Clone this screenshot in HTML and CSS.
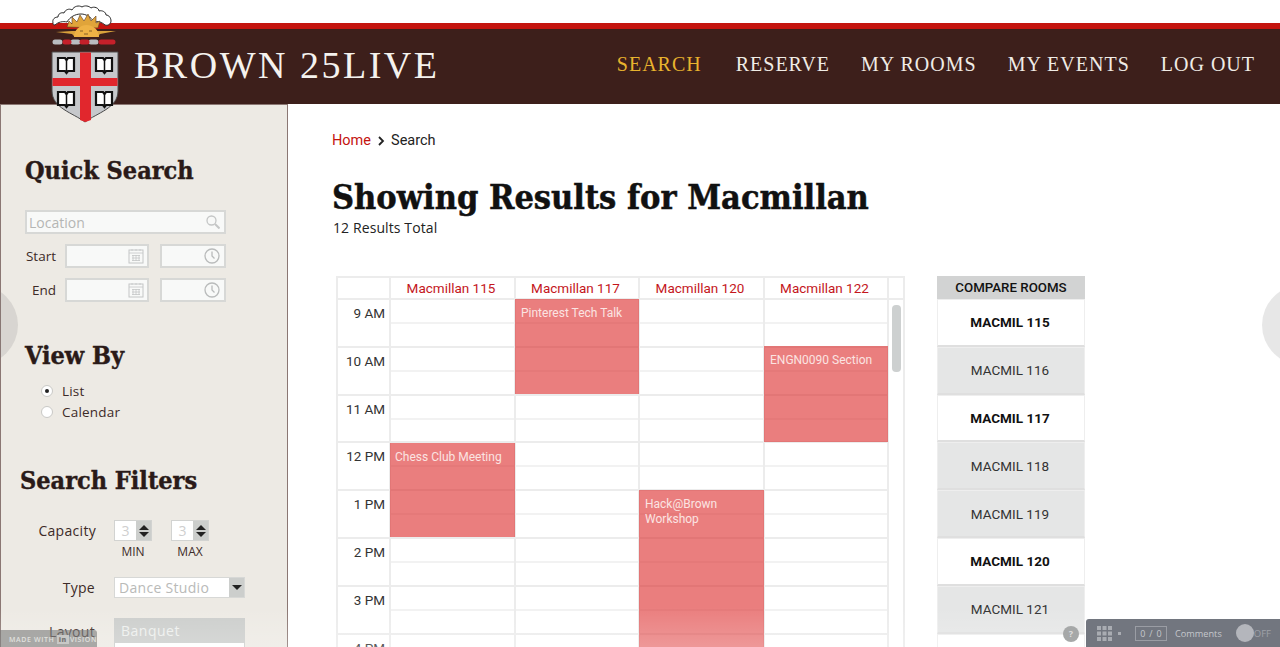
FILE: index.html
```html
<!DOCTYPE html>
<html lang="en">
<head>
<meta charset="utf-8">
<title>Brown 25Live</title>
<link rel="stylesheet" href="styles.css">
</head>
<body>
<div class="page">
<header class="header">
  <svg class="crest" viewBox="0 0 68 118" width="68" height="118">
    <path d="M2 18c-1-4 2-6 5-6 0-3 3-5 6-4 1-3 5-5 8-3 2-4 7-5 10-3 3-2 7-1 9 1 3-2 8 0 8 3 3-1 7 1 7 4 3 0 5 3 5 6 0 3-3 5-6 4-3-3-8-4-11-3-3-5-8-8-13-8-6 0-11 3-14 8-4-1-9 0-12 3-2 0-2-1-2-2z" fill="#fff" stroke="#2b2b2b" stroke-width="1"/>
    <path d="M16 22l2-6 3 3 0-7 5 5 3-7 4 6 4-7 3 7 5-5 0 7 4-2-2 7z" fill="#e0a43a" stroke="#5a3a20" stroke-width=".6"/>
    <path d="M5 27l16-1h28l16 0-16 3-3 3H24l-3-3z" fill="#d9a23c"/>
    <path d="M23 32a12.500 12 0 0 1 25 0z" fill="#eeb245"/>
    <path d="M29 26h3M38 26h3M33 29h4" stroke="#6a4a20" stroke-width=".8" fill="none"/>
    <g stroke-width="5" stroke-linecap="round" fill="none">
      <path d="M4 37h5M22 37h5M40 37h5" stroke="#b9bcc0"/>
      <path d="M14 37h4M31 37h5M50 37h12" stroke="#c4202a"/>
    </g>
    <path d="M1 47H67V86C67 103 46 108 34 117 22 108 1 103 1 86z" fill="#c6c8cb" stroke="#4a4a4a" stroke-width="1"/>
    <path d="M29 47.500H40V73H66.500V81H40V115L34.500 117 29 115V81H1.500V73H29z" fill="#e1272d"/>
    <g fill="#fff" stroke="#111" stroke-width="2.200">
      <path d="M7 53h7l1.500 2 1.500-2h6v13h-6l-1.500 2-1.500-2H7z"/><path d="M15.500 55V66" stroke-width="1.500"/>
      <path d="M45 53h7l1.500 2 1.500-2h6v13h-6l-1.500 2-1.500-2h-7z"/><path d="M53.500 55V66" stroke-width="1.500"/>
      <path d="M7 87h7l1.500 2 1.500-2h6v13h-6l-1.500 2-1.500-2H7z"/><path d="M15.500 89V100" stroke-width="1.500"/>
      <path d="M45 87h7l1.500 2 1.500-2h6v13h-6l-1.500 2-1.500-2h-7z"/><path d="M53.500 89V100" stroke-width="1.500"/>
    </g>
  </svg>
  <div class="brand">BROWN 25LIVE</div>
  <nav class="nav">
    <a class="nav-link active">SEARCH</a>
    <a class="nav-link">RESERVE</a>
    <a class="nav-link">MY ROOMS</a>
    <a class="nav-link">MY EVENTS</a>
    <a class="nav-link">LOG OUT</a>
  </nav>
</header>
<div class="main">
  <aside class="sidebar">
    <h2 class="side-title">Quick Search</h2>
    <div class="field wide"><span>Location</span>
      <svg width="14" height="14" viewBox="0 0 14 14" fill="none" stroke="#c4c6c6" stroke-width="1.300"><circle cx="5.500" cy="5.500" r="4.500"/><path d="M9 9l4.500 4.500" stroke-width="2"/></svg>
    </div>
    <div class="date-row">
      <label class="date-label">Start</label>
      <div class="field date"><svg class="cal" width="16" height="16" viewBox="0 0 16 16" fill="none" stroke="#c4c6c6"><rect x="1" y="2" width="14" height="13"/><path d="M1 5h14M4 1v2M8 1v2M12 1v2M4 7.500h8M4 10h8M4 12.500h8M5 7v6M8 7v6M11 7v6" stroke-width=".8"/></svg></div>
      <div class="field time"><svg width="16" height="16" viewBox="0 0 16 16" fill="none" stroke="#b9bbbb" stroke-width="1.300"><circle cx="8" cy="8" r="7"/><path d="M8 3.500V8l2.500 2.500"/></svg></div>
    </div>
    <div class="date-row">
      <label class="date-label">End</label>
      <div class="field date"><svg class="cal" width="16" height="16" viewBox="0 0 16 16" fill="none" stroke="#c4c6c6"><rect x="1" y="2" width="14" height="13"/><path d="M1 5h14M4 1v2M8 1v2M12 1v2M4 7.500h8M4 10h8M4 12.500h8M5 7v6M8 7v6M11 7v6" stroke-width=".8"/></svg></div>
      <div class="field time"><svg width="16" height="16" viewBox="0 0 16 16" fill="none" stroke="#b9bbbb" stroke-width="1.300"><circle cx="8" cy="8" r="7"/><path d="M8 3.500V8l2.500 2.500"/></svg></div>
    </div>
    <h2 class="side-title view-title">View By</h2>
    <div class="radio-row"><span class="radio on"></span>List</div>
    <div class="radio-row"><span class="radio"></span>Calendar</div>
    <h2 class="side-title filter-title">Search Filters</h2>
    <div class="cap-row">
      <label class="filter-label">Capacity</label>
      <div class="spin-wrap"><div class="spin"><span class="spin-val">3</span><span class="spin-btns"><i class="up"></i><i class="down"></i></span></div><small>MIN</small></div>
      <div class="spin-wrap"><div class="spin"><span class="spin-val">3</span><span class="spin-btns"><i class="up"></i><i class="down"></i></span></div><small>MAX</small></div>
    </div>
    <div class="type-row">
      <label class="filter-label">Type</label>
      <div class="select"><span>Dance Studio</span><b><i class="down"></i></b></div>
    </div>
    <div class="layout-row">
      <label class="filter-label">Layout</label>
      <div class="listbox"><div class="listbox-head">Banquet</div><div class="listbox-body"></div></div>
    </div>
  </aside>
  <section class="content">
    <div class="crumbs"><a>Home</a><svg width="8" height="10" viewBox="0 0 8 10" fill="none" stroke="#222" stroke-width="1.800"><path d="M2 1l4 4-4 4"/></svg><span>Search</span></div>
    <h1 class="title">Showing Results for Macmillan</h1>
    <p class="total">12 Results Total</p>
    <div class="results">
      <div class="calendar">
        <div class="cal-head">
          <div class="corner"></div>
          <div class="room">Macmillan 115</div><div class="room">Macmillan 117</div><div class="room">Macmillan 120</div><div class="room">Macmillan 122</div>
          <div class="sb-head"></div>
        </div>
        <div class="cal-body">
          <div class="hours">
            <div class="hour"><span>9 AM</span></div><div class="hour"><span>10 AM</span></div><div class="hour"><span>11 AM</span></div><div class="hour"><span>12 PM</span></div><div class="hour"><span>1 PM</span></div><div class="hour"><span>2 PM</span></div><div class="hour"><span>3 PM</span></div><div class="hour"><span>4 PM</span></div>
          </div>
          <div class="col">
            <div class="slot"></div><div class="slot"></div><div class="slot"></div><div class="slot"></div><div class="slot"></div><div class="slot"></div><div class="slot"></div><div class="slot"></div>
            <div class="event ev-chess">Chess Club Meeting</div>
          </div>
          <div class="col">
            <div class="slot"></div><div class="slot"></div><div class="slot"></div><div class="slot"></div><div class="slot"></div><div class="slot"></div><div class="slot"></div><div class="slot"></div>
            <div class="event ev-pin">Pinterest Tech Talk</div>
          </div>
          <div class="col">
            <div class="slot"></div><div class="slot"></div><div class="slot"></div><div class="slot"></div><div class="slot"></div><div class="slot"></div><div class="slot"></div><div class="slot"></div>
            <div class="event ev-hack">Hack@Brown Workshop</div>
          </div>
          <div class="col">
            <div class="slot"></div><div class="slot"></div><div class="slot"></div><div class="slot"></div><div class="slot"></div><div class="slot"></div><div class="slot"></div><div class="slot"></div>
            <div class="event ev-engn">ENGN0090 Section</div>
          </div>
          <div class="scroll"><div class="thumb"></div></div>
        </div>
      </div>
      <div class="compare">
        <div class="compare-head">COMPARE ROOMS</div>
        <div class="cmp on">MACMIL 115</div>
        <div class="cmp">MACMIL 116</div>
        <div class="cmp on">MACMIL 117</div>
        <div class="cmp">MACMIL 118</div>
        <div class="cmp">MACMIL 119</div>
        <div class="cmp on">MACMIL 120</div>
        <div class="cmp">MACMIL 121</div>
        <div class="cmp on"></div>
      </div>
    </div>
  </section>
</div>
<div class="nav-circle left"></div>
<div class="nav-circle right"></div>
<div class="fade"></div>
<div class="badge">MADE WITH <b>in</b>VISION</div>
<div class="help">?</div>
<div class="toolbar">
  <svg width="15" height="15" viewBox="0 0 15 15" fill="#a9acb2"><rect width="4" height="4"/><rect x="5.500" width="4" height="4"/><rect x="11" width="4" height="4"/><rect y="5.500" width="4" height="4"/><rect x="5.500" y="5.500" width="4" height="4"/><rect x="11" y="5.500" width="4" height="4"/><rect y="11" width="4" height="4"/><rect x="5.500" y="11" width="4" height="4"/><rect x="11" y="11" width="4" height="4"/></svg>
  <span class="tb-caret"></span>
  <span class="tb-count">0 / 0</span>
  <span class="tb-label">Comments</span>
  <span class="tb-toggle"><i></i>OFF</span>
</div>
</div>
</body>
</html>
```
FILE: styles.css
```css
* { box-sizing: border-box; }
html, body { margin: 0; padding: 0; }
body { background: #fff; font-family: "Open Sans", sans-serif; color: #111; }
.page { position: relative; width: 1280px; height: 647px; overflow: hidden; }

.header { position: relative; display: flex; align-items: center; height: 104px; padding: 23px 25px 0 134px; background: linear-gradient(#fff 0 23px, #c4140f 23px 29px, #3d1f1b 29px); }
.crest { position: absolute; left: 51px; top: 5px; z-index: 3; }
.brand { font-family: "Liberation Serif", serif; font-size: 38px; letter-spacing: 2.500px; color: #f5f2ee; white-space: nowrap; padding-top: 3px; }
.nav { display: flex; margin-left: auto; gap: 31px; padding-top: 1px; }
.nav-link { font-family: "Liberation Serif", serif; font-size: 20px; letter-spacing: 1px; color: #f0ece6; white-space: nowrap; }
.nav-link.active { color: #e8b32e; margin-right: 3px; }

.main { display: flex; height: 543px; }
.sidebar { flex: 0 0 288px; height: 543px; overflow: hidden; background: #edeae4; border-left: 1px solid #8b7773; border-right: 1px solid #8b7773; border-top: 1px solid #8b7773; padding: 0 0 0 24px; color: #3d2b28; font-size: 13.500px; }
.side-title { margin: 0; font-family: "DejaVu Serif Condensed", "DejaVu Serif", serif; font-weight: 700; font-size: 25px; line-height: 30px; color: #2a1a18; -webkit-text-stroke: .4px #2a1a18; }
.sidebar > .side-title:first-child { margin-top: 51px; }
.field { display: flex; align-items: center; justify-content: flex-end; height: 24px; background: #f8f9f8; border: 2px solid #d7d8d6; padding: 0 4px; }
.field.wide { width: 201px; margin-top: 24px; padding-left: 2px; justify-content: space-between; color: #b5b6b4; font-size: 14px; }
.date-row { display: flex; align-items: center; margin-top: 10px; }
.date-label { width: 31px; text-align: right; font-size: 13.500px; white-space: nowrap; }
.field.date { width: 84px; margin-left: 9px; padding-right: 3px; }
.field.time { width: 66px; margin-left: 11px; }
.view-title { margin-top: 39px; }
.radio-row { display: flex; align-items: center; gap: 9px; height: 21px; margin-left: 16px; font-size: 13.500px; letter-spacing: .2px; }
.view-title + .radio-row { margin-top: 9px; }
.radio { width: 12px; height: 12px; border-radius: 50%; background: #fff; border: 1px solid #c9c9c6; display: flex; align-items: center; justify-content: center; }
.radio.on::after { content: ""; width: 4px; height: 4px; border-radius: 50%; background: #222; }
.filter-title { margin: 44px 0 0 -5px; }
.filter-label { text-align: right; font-size: 14px; letter-spacing: .3px; }
.cap-row { display: flex; align-items: flex-start; margin-top: 24px; }
.cap-row .filter-label { width: 71px; line-height: 22px; }
.spin-wrap { display: flex; flex-direction: column; align-items: center; width: 38px; margin-left: 18px; }
.spin-wrap + .spin-wrap { margin-left: 19px; }
.spin { display: flex; width: 38px; height: 21px; background: #fff; border: 1px solid #d2d3d1; }
.spin-val { flex: 1; text-align: center; color: #cfcfcf; font-size: 14px; line-height: 19px; }
.spin-btns { width: 15px; background: #cccecc; display: flex; flex-direction: column; align-items: center; justify-content: center; gap: 2px; }
.up { width: 0; height: 0; border: 5px solid transparent; border-top: 0; border-bottom: 5px solid #222; }
.down { width: 0; height: 0; border: 5px solid transparent; border-bottom: 0; border-top: 5px solid #222; }
.spin-wrap small { font-size: 12px; margin-top: 2px; }
.type-row { display: flex; align-items: center; margin-top: 17px; }
.type-row .filter-label { width: 70px; }
.select { display: flex; width: 131px; height: 21px; margin-left: 19px; background: #fff; border: 1px solid #d7d8d6; color: #b9bab8; font-size: 14px; letter-spacing: .3px; line-height: 19px; padding-left: 4px; }
.select span { flex: 1; }
.select b { width: 15px; background: #cccecc; display: flex; align-items: center; justify-content: center; }
.layout-row { display: flex; align-items: flex-start; margin-top: 20px; }
.layout-row .filter-label { width: 70px; padding-top: 4px; }
.listbox { width: 131px; margin-left: 19px; background: #cccecc; padding: 0 1px; }
.listbox-head { height: 25px; line-height: 26px; padding-left: 6px; color: #eef0ee; font-size: 14px; letter-spacing: .5px; }
.listbox-body { height: 30px; background: #fff; }

.content { flex: 1; padding: 0 0 0 44px; }
.crumbs { display: flex; align-items: center; gap: 6px; margin-top: 28px; font-family: Roboto, sans-serif; font-size: 14.500px; line-height: 18px; color: #222; }
.crumbs a { color: #c4140f; }
.title { margin: 27px 0 0; font-family: "DejaVu Serif Condensed", "DejaVu Serif", serif; font-weight: 700; font-size: 34px; line-height: 40px; color: #111; white-space: nowrap; -webkit-text-stroke: .5px #111; }
.total { margin: 1px 0 0 1px; font-size: 14px; line-height: 20px; letter-spacing: .1px; color: #222; }
.results { display: flex; align-items: flex-start; margin-top: 38px; padding-left: 4px; }
.calendar { position: relative; width: 569px; border: 2px solid #ececec; border-bottom: 0; height: 380px; overflow: hidden; flex: none; font-family: Roboto, sans-serif; }
.calendar::before { content: ""; position: absolute; left: -2px; top: -1px; width: 2px; height: 2px; background: #d8262c; }
.cal-head { display: grid; grid-template-columns: 53px 125px 124px 125px 124px 1fr; height: 22px; border-bottom: 2px solid #ececec; }
.corner, .room, .sb-head { border-right: 2px solid #ececec; }
.sb-head { border-right: 0; }
.room { padding-right: 3px; text-align: center; color: #c4161c; font-size: 13.500px; line-height: 21px; }
.cal-body { position: relative; display: grid; grid-template-columns: 53px 125px 124px 125px 124px 1fr; }
.hours, .col { border-right: 2px solid #ececec; }
.col { position: relative; }
.hour { height: 47.800px; text-align: right; padding: 5px 4px 0 0; font-size: 13.500px; line-height: 17px; color: #333; border-bottom: 2px solid #ececec; }
.slot { height: 47.800px; border-bottom: 2px solid #ececec; background: linear-gradient(#fff 0 22px, #f2f2f2 22px 24px, #fff 24px); }
.event { position: absolute; left: -1px; right: -1px; padding: 7px 6px; background: rgba(220, 40, 40, .6); color: #fbe4e2; font-size: 12px; line-height: 15px; }
.ev-pin { top: -1px; height: 95px; }
.ev-engn { top: 46px; height: 96px; }
.ev-chess { top: 143px; height: 94px; padding-left: 5px; }
.ev-hack { top: 190px; height: 200px; }
.scroll { position: relative; padding: 5px 4px 0 3px; }
.thumb { height: 67px; width: 9px; border-radius: 4px; background: #cdd0d0; }
.compare { width: 148px; margin-left: 32px; flex: none; font-family: Roboto, sans-serif; }
.compare-head { height: 23px; background: #d2d3d3; text-align: center; font-size: 13.300px; font-weight: 500; line-height: 23px; color: #111; }
.cmp { height: 47.800px; display: flex; align-items: center; justify-content: center; padding-right: 2px; font-size: 13.500px; color: #333; background: #e5e6e6; border: 1px solid #eeeeee; border-bottom: 2px solid #dfdfdf; }
.cmp.on { background: #fff; font-weight: 700; color: #111; }

.nav-circle { position: absolute; top: 285px; width: 80px; height: 80px; border-radius: 50%; background: rgba(120, 120, 120, .18); }
.nav-circle.left { left: -62px; }
.nav-circle.right { right: -62px; }
.fade { position: absolute; left: 0; right: 0; bottom: 0; height: 40px; background: linear-gradient(rgba(255,255,255,0), rgba(255,255,255,.2)); pointer-events: none; }
.badge { position: absolute; left: 0; bottom: 0; width: 97px; height: 17px; border-radius: 0 3px 0 0; background: rgba(120, 122, 122, .6); color: #e0e0de; font-size: 7px; font-weight: 600; letter-spacing: .6px; line-height: 19px; padding-left: 9px; }
.badge b { background: #c8c8c6; color: #777; padding: 0 2px; margin-right: 1px; font-size: 7px; }
.help { position: absolute; left: 1063px; top: 626px; width: 16px; height: 16px; border-radius: 50%; background: #a6a8a8; color: #ddd; font-size: 9px; font-weight: 700; text-align: center; line-height: 16px; }
.toolbar { position: absolute; left: 1086px; right: 0; bottom: 0; height: 28px; border-radius: 3px 0 0 0; background: #72767f; display: flex; align-items: center; padding-left: 11px; color: #c5c7cc; font-size: 9px; }
.tb-caret { width: 3px; height: 3px; margin: 0 0 0 6px; background: #a9acb2; }
.tb-count { width: 32px; height: 15px; margin-left: 14px; border: 1px solid #9a9da4; text-align: center; line-height: 13px; word-spacing: 1.500px; }
.tb-label { margin-left: 8px; font-size: 9.200px; }
.tb-toggle { position: relative; display: flex; align-items: center; height: 14px; margin-left: 14px; padding-left: 18px; font-size: 9.500px; color: #9ea1a8; }
.tb-toggle i { position: absolute; left: 0; top: -2px; width: 18px; height: 18px; border-radius: 50%; background: #b4b6bc; }
```
